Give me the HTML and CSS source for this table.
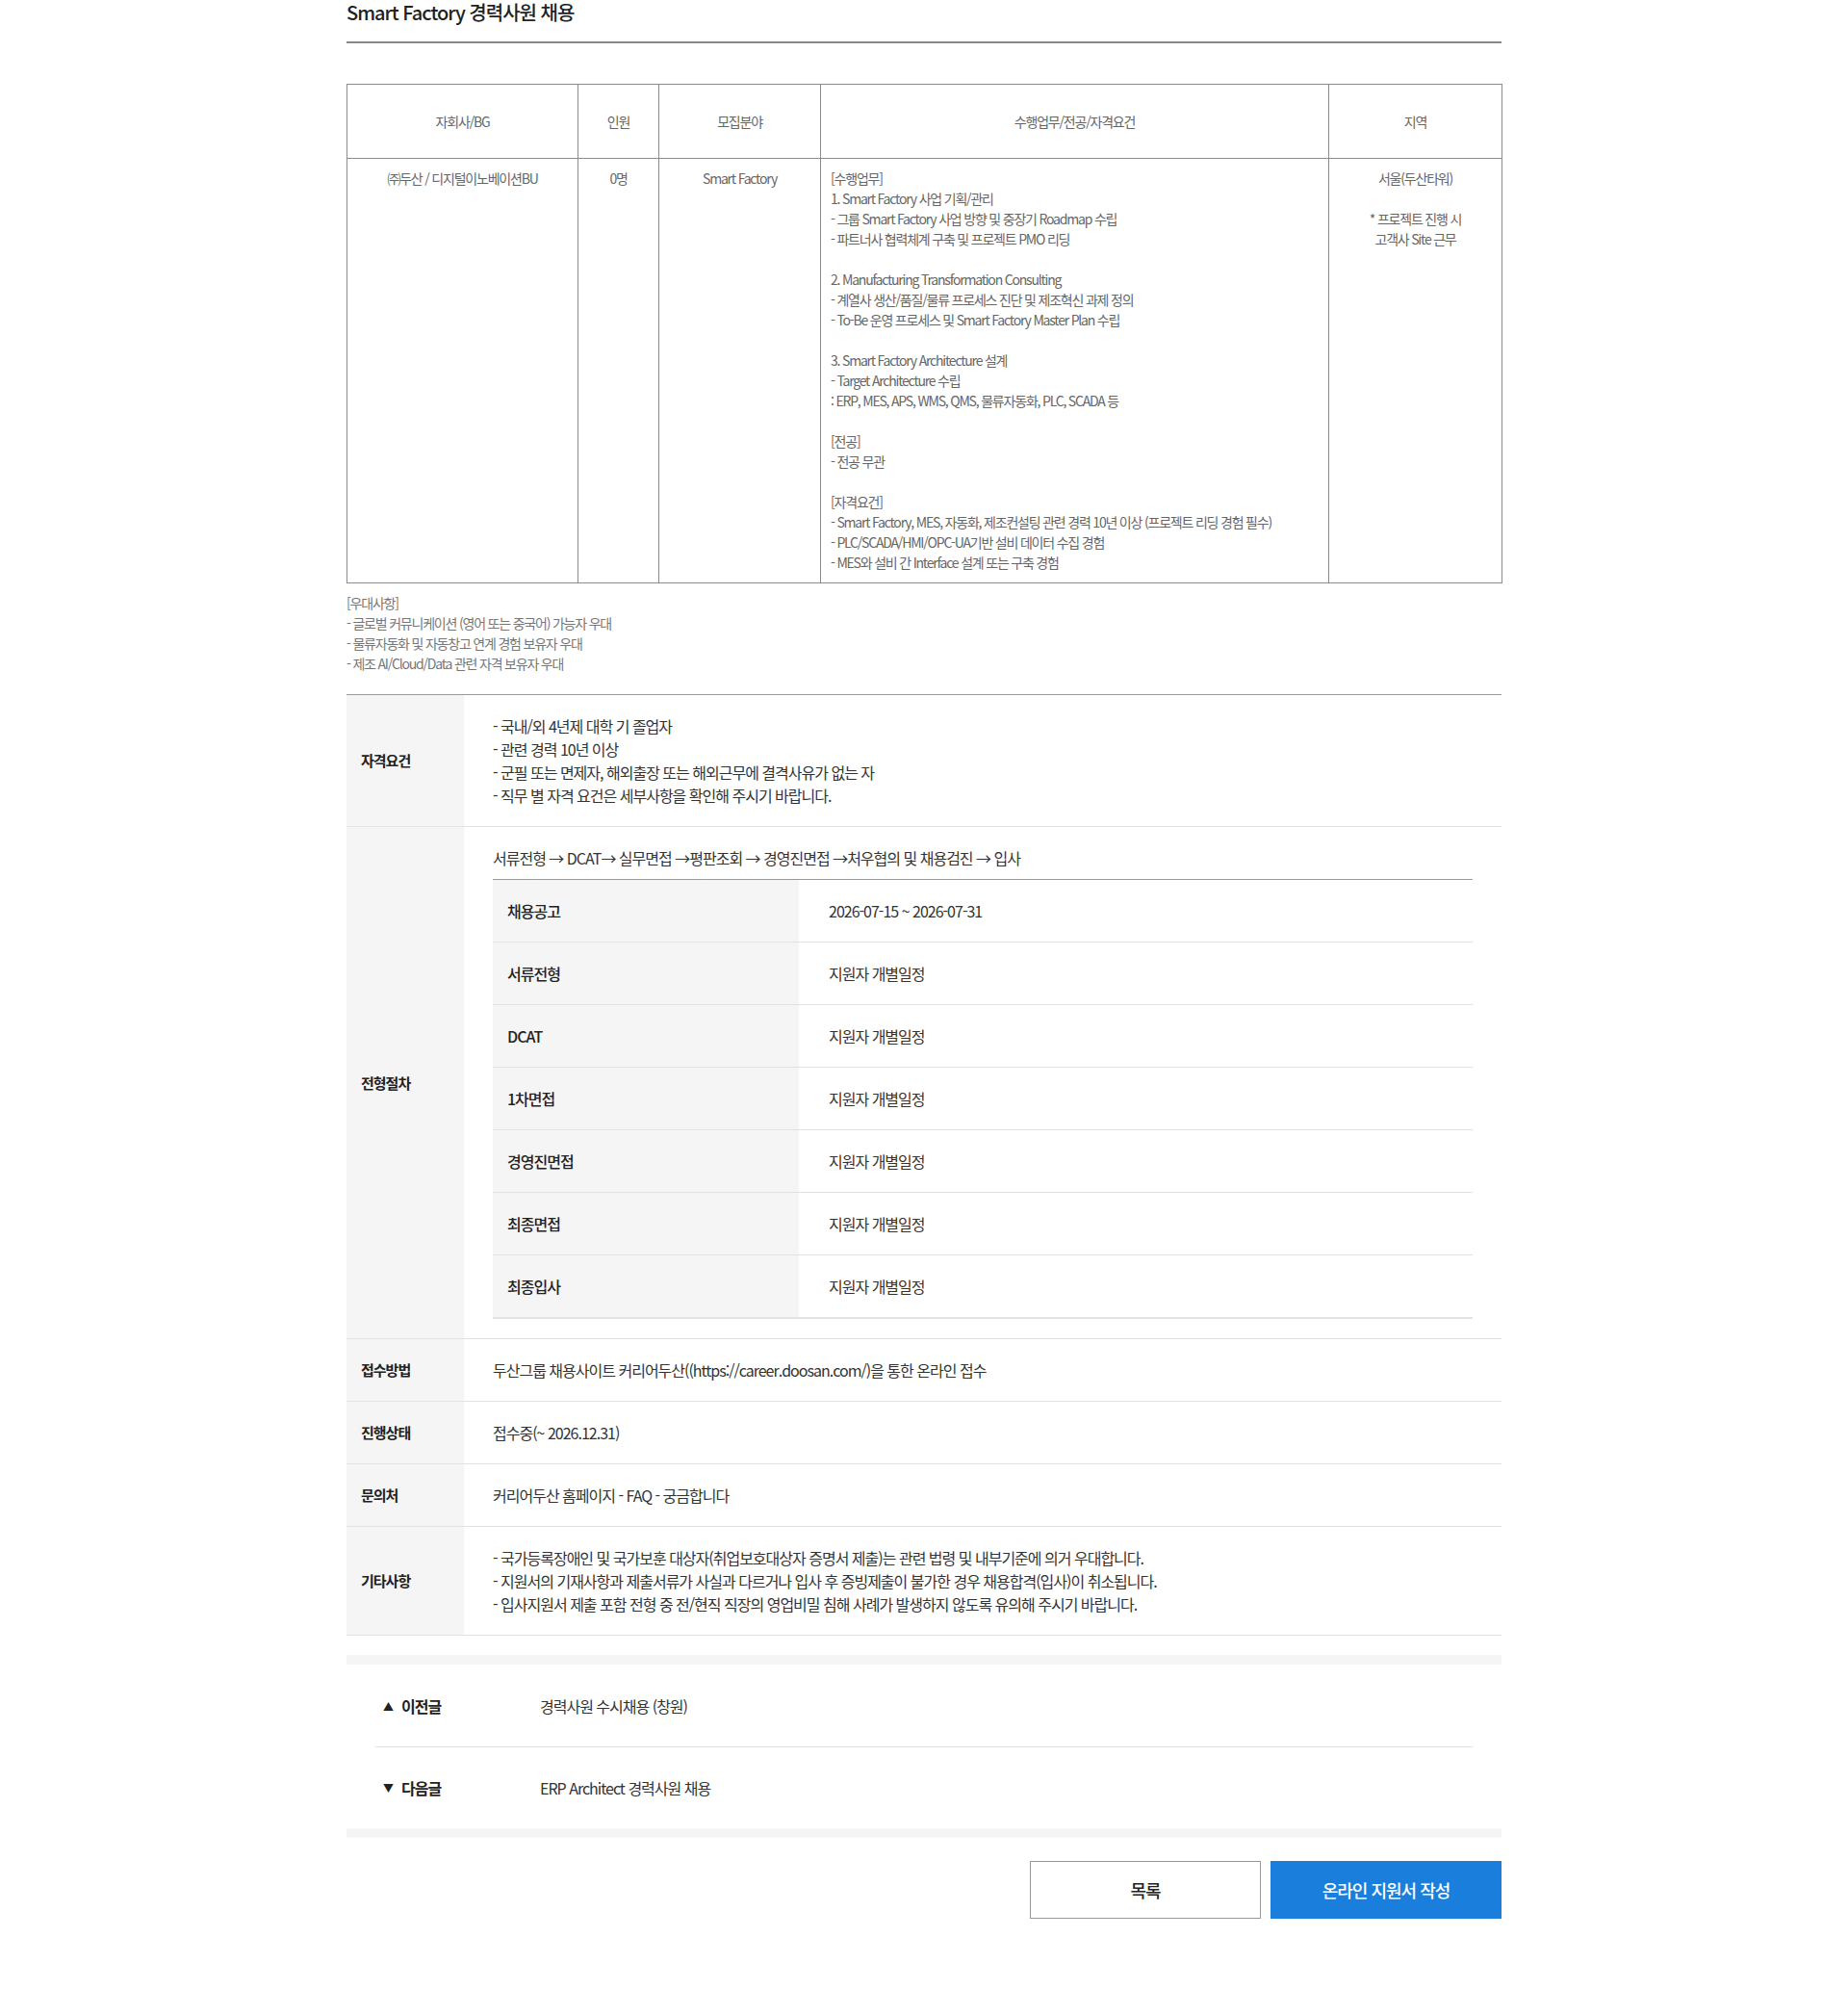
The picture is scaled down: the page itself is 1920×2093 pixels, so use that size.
FILE: index.html
```html
<!DOCTYPE html>
<html lang="ko">
<head>
<meta charset="utf-8">
<title>Smart Factory 경력사원 채용</title>
<link rel="stylesheet" href="styles.css">
</head>
<body>
<div class="page">
  <h2 class="title">Smart Factory 경력사원 채용</h2>

  <table class="job-table">
    <colgroup>
      <col class="c1"><col class="c2"><col class="c3"><col class="c4"><col class="c5">
    </colgroup>
    <thead>
      <tr>
        <th>자회사/BG</th>
        <th>인원</th>
        <th>모집분야</th>
        <th>수행업무/전공/자격요건</th>
        <th>지역</th>
      </tr>
    </thead>
    <tbody>
      <tr>
        <td class="center">㈜두산 / 디지털이노베이션BU</td>
        <td class="center">0명</td>
        <td class="center">Smart Factory</td>
        <td class="left">[수행업무]<br>1. Smart Factory 사업 기획/관리<br>- 그룹 Smart Factory 사업 방향 및 중장기 Roadmap 수립<br>- 파트너사 협력체계 구축 및 프로젝트 PMO 리딩<br><br>2. Manufacturing Transformation Consulting<br>- 계열사 생산/품질/물류 프로세스 진단 및 제조혁신 과제 정의<br>- To-Be 운영 프로세스 및 Smart Factory Master Plan 수립<br><br>3. Smart Factory Architecture 설계<br>- Target Architecture 수립<br>: ERP, MES, APS, WMS, QMS, 물류자동화, PLC, SCADA 등<br><br>[전공]<br>- 전공 무관<br><br>[자격요건]<br>- Smart Factory, MES, 자동화, 제조컨설팅 관련 경력 10년 이상 (프로젝트 리딩 경험 필수)<br>- PLC/SCADA/HMI/OPC-UA기반 설비 데이터 수집 경험<br>- MES와 설비 간 Interface 설계 또는 구축 경험</td>
        <td class="center">서울(두산타워)<br><br>* 프로젝트 진행 시<br>고객사 Site 근무</td>
      </tr>
    </tbody>
  </table>

  <p class="prefer">[우대사항]<br>- 글로벌 커뮤니케이션 (영어 또는 중국어) 가능자 우대<br>- 물류자동화 및 자동창고 연계 경험 보유자 우대<br>- 제조 AI/Cloud/Data 관련 자격 보유자 우대</p>

  <div class="info">
    <div class="row">
      <div class="label">자격요건</div>
      <div class="value">- 국내/외 4년제 대학 기 졸업자<br>- 관련 경력 10년 이상<br>- 군필 또는 면제자, 해외출장 또는 해외근무에 결격사유가 없는 자<br>- 직무 별 자격 요건은 세부사항을 확인해 주시기 바랍니다.</div>
    </div>
    <div class="row">
      <div class="label">전형절차</div>
      <div class="value">
        <p class="flow">서류전형 → DCAT→ 실무면접 →평판조회 → 경영진면접 →처우협의 및 채용검진 → 입사</p>
        <div class="steps">
          <div class="step"><div class="sk">채용공고</div><div class="sv">2026-07-15 ~ 2026-07-31</div></div>
          <div class="step"><div class="sk">서류전형</div><div class="sv">지원자 개별일정</div></div>
          <div class="step"><div class="sk">DCAT</div><div class="sv">지원자 개별일정</div></div>
          <div class="step"><div class="sk">1차면접</div><div class="sv">지원자 개별일정</div></div>
          <div class="step"><div class="sk">경영진면접</div><div class="sv">지원자 개별일정</div></div>
          <div class="step"><div class="sk">최종면접</div><div class="sv">지원자 개별일정</div></div>
          <div class="step"><div class="sk">최종입사</div><div class="sv">지원자 개별일정</div></div>
        </div>
      </div>
    </div>
    <div class="row">
      <div class="label">접수방법</div>
      <div class="value">두산그룹 채용사이트 커리어두산((https://career.doosan.com/)을 통한 온라인 접수</div>
    </div>
    <div class="row">
      <div class="label">진행상태</div>
      <div class="value">접수중(~ 2026.12.31)</div>
    </div>
    <div class="row">
      <div class="label">문의처</div>
      <div class="value">커리어두산 홈페이지 - FAQ - 궁금합니다</div>
    </div>
    <div class="row">
      <div class="label">기타사항</div>
      <div class="value">- 국가등록장애인 및 국가보훈 대상자(취업보호대상자 증명서 제출)는 관련 법령 및 내부기준에 의거 우대합니다.<br>- 지원서의 기재사항과 제출서류가 사실과 다르거나 입사 후 증빙제출이 불가한 경우 채용합격(입사)이 취소됩니다.<br>- 입사지원서 제출 포함 전형 중 전/현직 직장의 영업비밀 침해 사례가 발생하지 않도록 유의해 주시기 바랍니다.</div>
    </div>
  </div>

  <div class="pager">
    <div class="pager-row">
      <span class="pager-key"><span class="arrow">▲</span>이전글</span>
      <span class="pager-title">경력사원 수시채용 (창원)</span>
    </div>
    <div class="pager-row">
      <span class="pager-key"><span class="arrow">▼</span>다음글</span>
      <span class="pager-title">ERP Architect 경력사원 채용</span>
    </div>
  </div>

  <div class="buttons">
    <a class="btn btn-list" href="#">목록</a>
    <a class="btn btn-apply" href="#">온라인 지원서 작성</a>
  </div>
</div>
</body>
</html>
```
FILE: styles.css
```css
* { box-sizing: border-box; }
html, body { margin: 0; padding: 0; background: #fff; }
body {
  font-family: "Noto Sans CJK KR", "Noto Sans", sans-serif;
  color: #333;
  letter-spacing: -1px;
}
.page {
  width: 1200px;
  margin: 0 auto;
  padding-bottom: 100px;
}
.title {
  margin: 0;
  font-size: 20px;
  font-weight: 500;
  line-height: 26px;
  color: #222;
  padding-bottom: 17px;
  border-bottom: 2px solid #888;
}

/* job table */
.job-table {
  width: 100%;
  margin-top: 42px;
  border-collapse: collapse;
  table-layout: fixed;
  font-size: 14px;
  line-height: 21px;
  letter-spacing: -1.2px;
  color: #666;
}
.job-table .c1 { width: 240px; }
.job-table .c2 { width: 84px; }
.job-table .c3 { width: 168px; }
.job-table .c4 { width: 528px; }
.job-table .c5 { width: 180px; }
.job-table th,
.job-table td {
  border: 1px solid #8c8c8c;
}
.job-table th {
  height: 77px;
  font-weight: 400;
  text-align: center;
  vertical-align: middle;
  padding: 0;
}
.job-table td {
  vertical-align: top;
  padding: 10px 10px 10px;
}
.job-table td.center { text-align: center; }
.job-table td.left { text-align: left; }

.prefer {
  margin: 10px 0 0;
  font-size: 14px;
  line-height: 21px;
  letter-spacing: -1.2px;
  color: #777;
}

/* info */
.info {
  margin-top: 21px;
  border-top: 1px solid #999;
  border-bottom: 1px solid #e2e2e2;
  font-size: 16px;
  line-height: 24px;
}
.row {
  display: grid;
  grid-template-columns: 122px 1fr;
  border-bottom: 1px solid #e2e2e2;
}
.row:last-child { border-bottom: 0; }
.label {
  background: #f5f5f5;
  display: flex;
  align-items: center;
  padding-left: 15px;
  font-size: 15px;
  font-weight: 700;
  color: #222;
}
.value {
  padding: 20px 30px;
  color: #333;
}
.flow { margin: 0 0 10px; }
.steps {
  border-top: 1px solid #999;
  border-bottom: 1px solid #e2e2e2;
}
.step {
  display: grid;
  grid-template-columns: 318px 1fr;
  border-bottom: 1px solid #e2e2e2;
}
.sk {
  background: #f5f5f5;
  padding: 20px 15px;
  font-weight: 500;
  color: #222;
}
.sv {
  padding: 20px 31px;
}

/* pager */
.pager {
  margin-top: 20px;
  border-top: 10px solid #f5f5f5;
  border-bottom: 10px solid #f5f5f5;
  padding: 0 30px;
}
.pager-row {
  display: flex;
  align-items: center;
  height: 85px;
  font-size: 16px;
}
.pager-row + .pager-row { border-top: 1px solid #e2e2e2; }
.pager-key {
  width: 171px;
  padding-left: 8px;
  font-weight: 700;
  color: #222;
}
.arrow {
  display: inline-block;
  font-size: 11px;
  margin-right: 9px;
  vertical-align: 2px;
}
.pager-title { color: #333; }

/* buttons */
.buttons {
  display: flex;
  justify-content: flex-end;
  gap: 10px;
  margin-top: 24px;
}
.btn {
  width: 240px;
  height: 60px;
  display: flex;
  align-items: center;
  justify-content: center;
  text-decoration: none;
  font-size: 18px;
  font-weight: 500;
}
.btn-list {
  border: 1px solid #999;
  color: #222;
  background: #fff;
}
.btn-apply {
  background: #1a7fdc;
  color: #fff;
}
```
